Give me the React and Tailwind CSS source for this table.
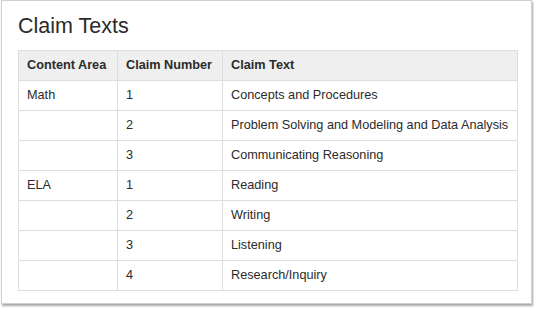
import React from "react";

const rows = [
  ["Math", "1", "Concepts and Procedures"],
  ["", "2", "Problem Solving and Modeling and Data Analysis"],
  ["", "3", "Communicating Reasoning"],
  ["ELA", "1", "Reading"],
  ["", "2", "Writing"],
  ["", "3", "Listening"],
  ["", "4", "Research/Inquiry"],
];

export default function App() {
  return (
    <div className="w-[534px] h-[309px] bg-white" style={{ fontFamily: '"Liberation Sans", Arial, sans-serif' }}>
      <div className="ml-[1px] w-[531px] h-[304px] bg-white border border-[#d0d0d0] shadow-[1px_2px_2px_rgba(0,0,0,0.35)] pl-[16px] pt-[13px]">
        <h1 className="text-[21.5px] leading-[24px] text-[#2b2b2b] font-normal">Claim Texts</h1>
        <table className="mt-[12px] w-[500px] border-collapse text-[12.7px] leading-[17px] text-[#2b2b2b] table-fixed">
          <colgroup>
            <col className="w-[99px]" />
            <col className="w-[105px]" />
            <col />
          </colgroup>
          <thead>
            <tr className="bg-[#efefef]">
              <th className="border border-[#dddddd] px-[8px] py-[6px] text-left font-bold">Content Area</th>
              <th className="border border-[#dddddd] px-[8px] py-[6px] text-left font-bold">Claim Number</th>
              <th className="border border-[#dddddd] px-[8px] py-[6px] text-left font-bold">Claim Text</th>
            </tr>
          </thead>
          <tbody>
            {rows.map((r, i) => (
              <tr key={i}>
                {r.map((c, j) => (
                  <td key={j} className="border border-[#dddddd] px-[8px] py-[6px] whitespace-nowrap">{c}</td>
                ))}
              </tr>
            ))}
          </tbody>
        </table>
      </div>
    </div>
  );
}
